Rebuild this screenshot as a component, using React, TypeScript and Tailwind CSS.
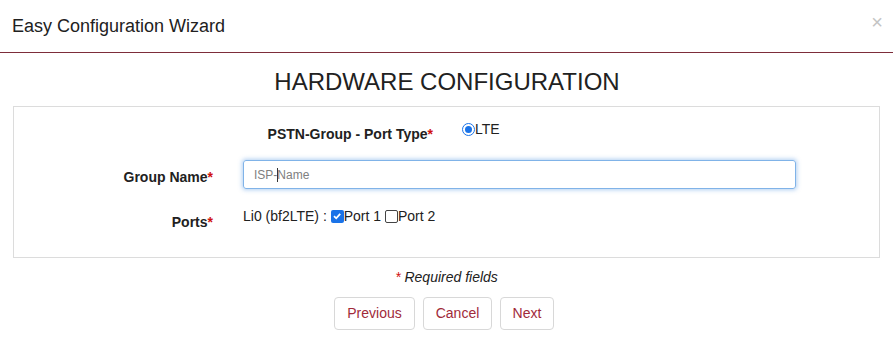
export default function App() {
  return (
    <div className="w-[893px] h-[344px] bg-white text-[#212121] overflow-hidden" style={{ fontFamily: '"Liberation Sans", Arial, sans-serif' }}>
      {/* Header */}
      <div className="h-[53px] flex items-center justify-between pl-3 pr-[10px] border-b border-[#7d2d3a]">
        <h1 className="text-[18px] pt-[1px]">Easy Configuration Wizard</h1>
        <span className="text-[#c4c4c4] text-[20px] leading-none pb-[8px]">×</span>
      </div>

      <h2 className="text-center text-[24px] leading-none mt-[17px] mb-[12px] pl-[1px]">HARDWARE CONFIGURATION</h2>

      {/* Form box */}
      <div className="mx-[13px] border border-[#dcdcdc] h-[152px] pt-[14px]">
        <div className="flex items-start text-[14px] leading-[20px]">
          <div className="w-[419px] text-right font-bold pt-[3px]">
            PSTN-Group - Port Type<span className="text-[#d01010]">*</span>
          </div>
          <label className="ml-[29px] flex items-center text-[14px] -mt-[2px]">
            <span className="w-[13px] h-[13px] rounded-full border-[1.5px] border-[#1a73e8] bg-white flex items-center justify-center">
              <span className="w-[7px] h-[7px] rounded-full bg-[#1a73e8]" />
            </span>
            LTE
          </label>
        </div>

        <div className="flex items-center mt-[16px]">
          <div className="w-[199px] text-right font-bold text-[14px] leading-[20px] pt-[4px]">
            Group Name<span className="text-[#d01010]">*</span>
          </div>
          <div className="ml-[30px] w-[553px] h-[29px] border border-[#80b3e8] rounded-[3px] shadow-[0_0_4px_1px_rgba(100,160,230,0.5)] flex items-center pl-[10px] text-[12px] text-[#808080]">
            ISP-<span className="inline-block w-px h-[14px] bg-[#333] -mr-px" />Name
          </div>
        </div>

        <div className="flex items-start mt-[17px] text-[14px] leading-[20px]">
          <div className="w-[199px] text-right font-bold pt-[6px]">
            Ports<span className="text-[#d01010]">*</span>
          </div>
          <div className="ml-[30px] flex items-center">
            Li0 (bf2LTE) :&nbsp;
            <span className="w-[13px] h-[13px] rounded-[2px] bg-[#1a73e8] flex items-center justify-center">
              <svg width="10" height="10" viewBox="0 0 10 10"><path d="M2 5.2 L4.2 7.3 L8.2 2.8" stroke="white" strokeWidth="1.8" fill="none" /></svg>
            </span>
            Port 1&nbsp;
            <span className="w-[13px] h-[13px] rounded-[2px] border border-[#444] bg-white" />
            Port 2
          </div>
        </div>
      </div>

      <p className="text-center italic text-[14px] leading-[20px] mt-[9px]">
        <span className="text-[#d01010]">*</span> Required fields
      </p>

      <div className="flex justify-center gap-[8px] mt-[10px] pr-[5px]">
        <button className="w-[81px] h-[33px] border border-[#d8d8d8] rounded-[4px] text-[14px] text-[#a12a3a]">Previous</button>
        <button className="w-[69px] h-[33px] border border-[#d8d8d8] rounded-[4px] text-[14px] text-[#a12a3a]">Cancel</button>
        <button className="w-[54px] h-[33px] border border-[#d8d8d8] rounded-[4px] text-[14px] text-[#a12a3a]">Next</button>
      </div>
    </div>
  );
}
